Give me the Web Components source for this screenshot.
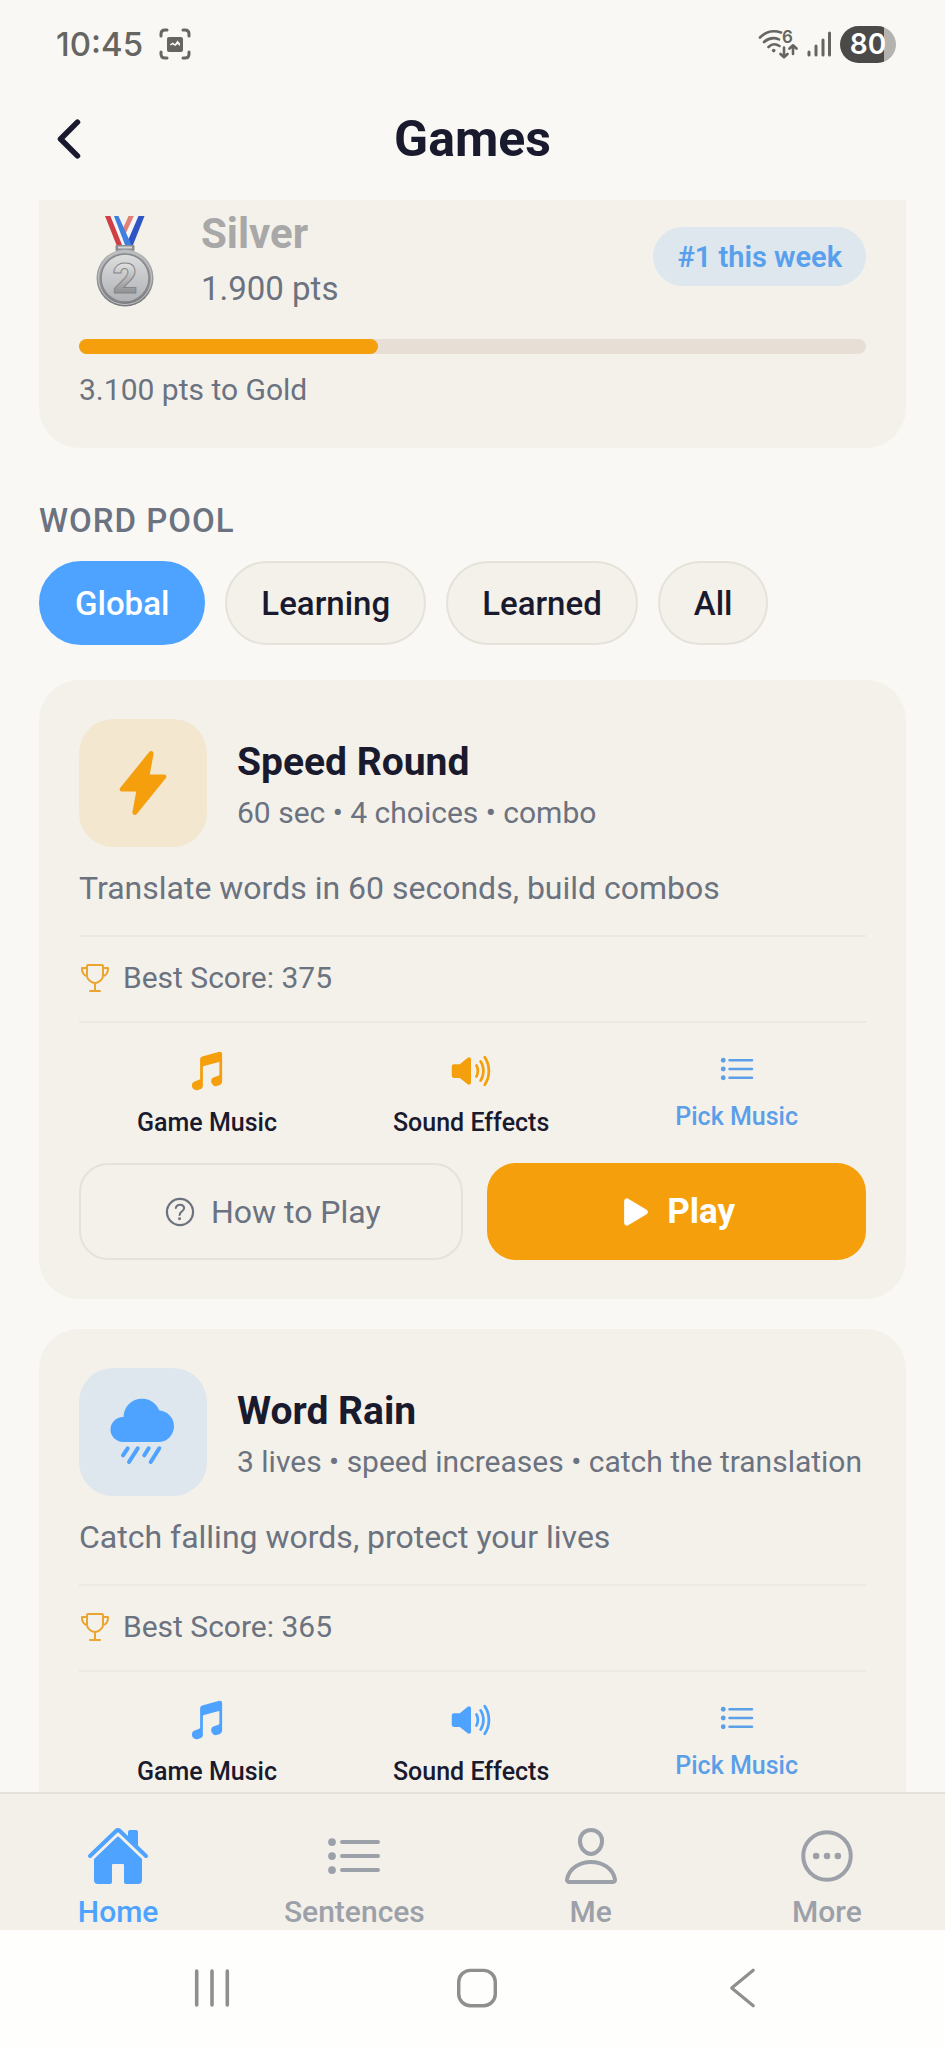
<!DOCTYPE html>
<html lang="en">
<head>
<meta charset="utf-8">
<meta name="viewport" content="width=device-width, initial-scale=1">
<title>Games</title>
<style>
  html, body { margin: 0; }
  body {
    --bg: #faf8f5;
    --card: #f4f1ea;
    --line: #e5e2da;
    --hairline: #ece9e2;
    --ink: #1a1a2e;
    --muted: #6b7280;
    --faint: #9ca0a8;
    --orange: #f49f0b;
    --blue: #4da3ff;
    --blue-soft: #dee7ed;
    --orange-soft: #f3e7d0;
    background: var(--bg);
    color: var(--ink);
    font-family: Roboto, "Liberation Sans", sans-serif;
  }
</style>
</head>
<body>
<app-shell>
  <status-bar slot="top" time="10:45" battery="80"></status-bar>
  <app-header slot="top">Games</app-header>

  <rank-card tier="Silver" points="1.900 pts" rank="#1 this week" progress="38" next="3.100 pts to Gold"></rank-card>

  <word-pool label="WORD POOL">
    <filter-chip selected>Global</filter-chip>
    <filter-chip>Learning</filter-chip>
    <filter-chip>Learned</filter-chip>
    <filter-chip>All</filter-chip>
  </word-pool>

  <game-card accent="orange" icon="flash" best="375">
    <span slot="title">Speed Round</span>
    <span slot="meta">60 sec • 4 choices • combo</span>
    <span slot="description">Translate words in 60 seconds, build combos</span>
    <game-actions slot="actions"></game-actions>
  </game-card>

  <game-card accent="blue" icon="rainy" best="365">
    <span slot="title">Word Rain</span>
    <span slot="meta">3 lives • speed increases • catch the translation</span>
    <span slot="description">Catch falling words, protect your lives</span>
  </game-card>

  <tab-bar slot="bottom">
    <tab-item icon="home" active>Home</tab-item>
    <tab-item icon="list">Sentences</tab-item>
    <tab-item icon="person">Me</tab-item>
    <tab-item icon="more">More</tab-item>
  </tab-bar>
  <system-nav slot="bottom"></system-nav>
</app-shell>

<script>
/* Registers an element whose shadow root is built from a markup function. */
const element = (name, render) => customElements.define(name, class extends HTMLElement {
  connectedCallback() {
    if (this.shadowRoot) return;
    const template = document.createElement('template');
    template.innerHTML = render(this);
    this.attachShadow({ mode: 'open' }).append(template.content.cloneNode(true));
  }
});

const stroke = (width) => `fill="none" stroke="currentColor" stroke-width="${width}" stroke-linecap="round" stroke-linejoin="round"`;

const ICONS = {
  back: `<path ${stroke(48)} d="M328 112 184 256l144 144"/>`,
  flash: `<path d="M194.82 496a18.36 18.36 0 01-18.1-21.53v-.11L204.83 320H96a16 16 0 01-12.44-26.06L302.73 23a18.45 18.45 0 0132.8 13.71c0 .3-.08.59-.13.89L307.19 192H416a16 16 0 0112.44 26.06L209.24 489a18.45 18.45 0 01-14.42 7z"/>`,
  rainy: `<g transform="scale(7.53)"><circle cx="33" cy="19.2" r="18.5"/><circle cx="14" cy="31.5" r="12.5"/><circle cx="49.3" cy="28.3" r="15.7"/><path d="M14 25h36v19H14z"/><path ${stroke(4)} d="M18.7 50.3 14 57.3M28.7 50.3 20 64M39.7 50.3l-4.4 7M50.3 50.3 41.7 64"/></g>`,
  trophy: `<path ${stroke(32)} d="M176 464h160M256 464V336M384 224c0-50.64-.08-134.63-.12-160a16 16 0 00-16-16l-223.79.26a16 16 0 00-16 15.95c0 30.58-.13 129.17-.13 159.79 0 64.28 83 112 128 112S384 288.28 384 224zM128 96H48v16c0 55.22 33.55 112 80 112M384 96h80v16c0 55.22-33.55 112-80 112"/>`,
  music: `<path d="M421.84 37.37a25.86 25.86 0 00-22.6-4.46L199.92 86.49A32.3 32.3 0 00176 118v226c0 6.74-4.36 12.56-11.11 14.83l-.12.05-52 18C92.88 383.53 80 402 80 423.91a55.54 55.54 0 0023.23 45.63A54.78 54.78 0 00135.34 480a55.82 55.82 0 0017.75-2.93l.38-.13 21.84-7.94A47.84 47.84 0 00208 423.91v-212c0-7.29 4.77-13.21 12.16-15.07l.21-.06L395 150.14a4 4 0 015 3.86v141.93c0 6.75-4.25 12.38-11.11 14.68l-.25.09-50.89 18.11A49.09 49.09 0 00304 375.92a55.67 55.67 0 0023.23 45.8 54.63 54.63 0 0049.88 7.35l.36-.12 21.84-7.95A47.83 47.83 0 00432 375.92V58a25.74 25.74 0 00-10.16-20.63z"/>`,
  volume: `<path d="M232 416a23.88 23.88 0 01-14.2-4.68 8.27 8.27 0 01-.66-.51L125.76 336H56a24 24 0 01-24-24V200a24 24 0 0124-24h69.75l91.37-74.81a8.27 8.27 0 01.66-.51A24 24 0 01256 120v272a24 24 0 01-24 24zM320 336a16 16 0 01-14.29-23.19c9.49-18.87 14.3-38 14.3-56.81 0-19.38-4.66-37.94-14.25-56.73a16 16 0 0128.5-14.54C346.19 208.12 352 231.44 352 256c0 23.86-6 47.81-17.7 71.19A16 16 0 01320 336zM368 384a16 16 0 01-13.86-24C373.05 327.09 384 299.51 384 256c0-44.17-10.93-71.56-29.82-103.94a16 16 0 0127.64-16.12C402.92 172.11 416 204.81 416 256c0 50.43-13.06 83.29-34.13 120a16 16 0 01-13.87 8zM416 432a16 16 0 01-13.39-24.74C429.85 365.47 448 323.76 448 256c0-66.5-18.18-108.62-45.38-151.31a16 16 0 1127-17.2C459.81 134.89 480 181.74 480 256c0 64.75-14.66 113.63-50.6 168.74A16 16 0 01416 432z"/>`,
  list: `<path ${stroke(32)} d="M160 144h288M160 256h288M160 368h288"/><circle cx="80" cy="144" r="31"/><circle cx="80" cy="256" r="31"/><circle cx="80" cy="368" r="31"/>`,
  help: `<circle ${stroke(30)} cx="256" cy="256" r="176"/><path ${stroke(28)} d="M200 202.29s.84-17.5 19.57-32.57C230.68 160.77 244 158.18 256 158c10.93-.14 20.69 1.67 26.53 4.45 10 4.76 29.47 16.38 29.47 41.09 0 26-17 37.81-36.37 50.8S251 281.43 251 296"/><circle cx="250" cy="348" r="20"/>`,
  play: `<path d="M133 440a35.37 35.37 0 01-17.5-4.67c-12-6.8-19.46-20-19.46-34.33V111c0-14.37 7.46-27.53 19.46-34.33a35.13 35.13 0 0135.77.45l247.85 148.36a36 36 0 010 61l-247.89 148.4A35.5 35.5 0 01133 440z"/>`,
  home: `<path d="M261.56 101.69a8 8 0 00-11.06 0L66.4 277.15a8 8 0 00-2.47 5.79L63.9 448a32 32 0 0032 32H192a16 16 0 0016-16V328a8 8 0 018-8h80a8 8 0 018 8v136a16 16 0 0016 16h96.06a32 32 0 0032-32V282.94a8 8 0 00-2.47-5.79z"/><path d="M490.91 244.15l-74.8-71.56V64a16 16 0 00-16-16h-48a16 16 0 00-16 16v32l-57.92-55.38C272.77 35.14 264.71 32 256 32c-8.68 0-16.72 3.14-22.14 8.63l-212.7 203.5c-6.22 6-7 15.87-1.34 22.37A16 16 0 0043 267.56L250.5 69.28a8 8 0 0111.06 0l207.52 198.28a16 16 0 0022.59-.44c6.14-6.36 5.63-16.86-.76-22.97z"/>`,
  person: `<path ${stroke(32)} d="M344 144c-3.92 52.87-44 96-88 96s-84.15-43.12-88-96c-4-55 35-96 88-96s92 42 88 96zM256 304c-87 0-175.3 48-191.64 138.6C62.39 453.52 68.57 464 80 464h352c11.44 0 17.62-10.48 15.65-21.4C431.3 352 343 304 256 304z"/>`,
  more: `<circle ${stroke(32)} cx="256" cy="256" r="190"/><circle cx="169" cy="256" r="26"/><circle cx="256" cy="256" r="26"/><circle cx="343" cy="256" r="26"/>`,
  sysRecents: `<path ${stroke(46)} d="M60 40v432M256 40v432M452 40v432"/>`,
  sysHome: `<rect ${stroke(44)} x="22" y="30" width="468" height="452" rx="150"/>`,
  sysBack: `<path ${stroke(40)} d="M400 28 124 256l276 228"/>`
};

element('app-icon', (el) => `
  <style>
    :host { display: block; flex: none; }
    svg { display: block; width: 100%; height: 100%; overflow: visible; }
  </style>
  <svg viewBox="0 0 512 512" fill="currentColor" aria-hidden="true">${ICONS[el.getAttribute('name')]}</svg>`);

element('app-shell', () => `
  <style>
    :host { display: flex; flex-direction: column; height: 100vh; }
    main { flex: 1; min-height: 0; overflow-y: auto; scrollbar-width: none; display: flex; flex-direction: column; padding: 0 39px; }
    ::slotted(*) { flex: none; }
  </style>
  <slot name="top"></slot>
  <main><slot></slot></main>
  <slot name="bottom"></slot>`);

element('status-bar', (el) => `
  <style>
    :host { display: flex; align-items: center; justify-content: space-between; height: 88px; padding: 0 49px 0 56px; color: #656561; font-family: Inter, Roboto, sans-serif; }
    div { display: flex; align-items: center; gap: 8px; }
    .left { gap: 16px; }
    time { font-size: 33px; line-height: 40px; font-weight: 500; }
    svg { display: block; }
    .battery { width: 56px; height: 37px; border-radius: 19px; justify-content: center; background: linear-gradient(90deg, #4b4a48 79%, #b4b3b0 79%); color: #fff; font-size: 28px; line-height: 36px; font-weight: 600; }
  </style>
  <div class="left">
    <time>${el.getAttribute('time')}</time>
    <svg width="32" height="32" viewBox="0 0 32 32" aria-hidden="true">
      <path fill="none" stroke="currentColor" stroke-width="3" stroke-linecap="round" d="M2 8V6q0-4 4-4h2M24 2h2q4 0 4 4v2M30 24v2q0 4-4 4h-2M8 30H6q-4 0-4-4v-2"/>
      <rect x="8" y="9" width="16" height="15" rx="2" fill="currentColor"/>
      <path fill="#faf8f5" d="M11 16.500l2.500-2 2.500 1.500 2.500-3.500 2.500 3v2.500l-2.500-2-2 2-3-1.500-2.500 1z"/>
    </svg>
  </div>
  <div>
    <svg width="41" height="34" viewBox="0 0 41 34" fill="none" stroke="currentColor" stroke-width="2.6" stroke-linecap="round" stroke-linejoin="round" aria-hidden="true">
      <path d="M2 10.500Q11 1.500 23 5.500M6 15q7-6 15-2.600M10.500 20q5-5 11-1M26 20.500V30M22.500 27l3.500 3.200 3.500-3.200M35 27v-8.500M31.500 21.500l3.500-3.200 3.500 3.200"/>
      <circle cx="15.700" cy="23.600" r="1.800" fill="currentColor" stroke="none"/>
      <text x="24" y="16" font-size="17" font-weight="600" fill="currentColor" stroke="none">6</text>
    </svg>
    <svg width="25" height="28" viewBox="0 0 25 28" fill="none" stroke="currentColor" stroke-width="3" stroke-linecap="round" aria-hidden="true">
      <path d="M2 22v3M9 16v9M16 10v15M22.500 3v22"/>
    </svg>
    <div class="battery">${el.getAttribute('battery')}</div>
  </div>`);

element('app-header', () => `
  <style>
    :host { display: grid; grid-template-columns: 1fr auto 1fr; align-items: center; height: 102px; padding: 0 39px 10px; box-sizing: border-box; height: 112px; }
    button { border: 0; padding: 0; background: none; color: inherit; justify-self: start; }
    app-icon { width: 60px; height: 60px; }
    h1 { margin: 0; font-size: 50px; line-height: 60px; font-weight: 700; }
  </style>
  <button type="button" aria-label="Back"><app-icon name="back"></app-icon></button>
  <h1><slot></slot></h1>`);

element('rank-card', (el) => `
  <style>
    :host { display: block; padding: 9px 40px 40px; background: var(--card); border-radius: 0 0 40px 40px; }
    .row { display: flex; align-items: center; gap: 28px; }
    .medal { display: block; flex: none; }
    .who { flex: 1; display: flex; flex-direction: column; gap: 10px; }
    h2 { margin: 0; font-size: 42px; line-height: 50px; font-weight: 700; color: #a8a8a8; }
    p { margin: 0; color: var(--muted); }
    .points { font-size: 33px; line-height: 40px; }
    .next { margin-top: 18px; font-size: 30px; line-height: 36px; }
    .rank { align-self: flex-start; margin-top: 18px; padding: 12px 24px 11px; border-radius: 30px; background: var(--blue-soft); color: #58a0ec; font-size: 29px; line-height: 36px; font-weight: 600; }
    .track { height: 15px; margin-top: 30px; border-radius: 8px; background: #e7dfd5; }
    .fill { height: 100%; border-radius: 8px; background: var(--orange); width: ${el.getAttribute('progress')}%; }
  </style>
  <div class="row">
    <svg class="medal" width="94" height="100" viewBox="0 0 94 100" aria-hidden="true">
      <defs>
        <linearGradient id="rim" x1="0" y1="0" x2="0" y2="1"><stop offset="0" stop-color="#b9babb"/><stop offset="1" stop-color="#77787b"/></linearGradient>
        <linearGradient id="face" x1="0" y1="0" x2="0" y2="1"><stop offset="0" stop-color="#dcdddd"/><stop offset="1" stop-color="#b0b1b4"/></linearGradient>
        <linearGradient id="digit" x1="0" y1="0" x2="0" y2="1"><stop offset="0.2" stop-color="#e2e2e2"/><stop offset="0.8" stop-color="#8f9092"/></linearGradient>
      </defs>
      <path fill="#e08078" d="M49.500 7H55L45 30l-3-6z"/>
      <path fill="#f5f4f6" d="M55 7h4.500L48 36h-5l1-6z"/>
      <path fill="#2f55c4" d="M59.500 7h6L54 36h-7z"/>
      <path fill="#cf3f45" d="M26 7h5.500L44 36h-6.500z"/>
      <path fill="#f5f4f6" d="M31.500 7H35l12 29h-4z"/>
      <path fill="#3f7fe0" d="M35 7h4.500l13 29h-6.500z"/>
      <rect x="36.500" y="36" width="19" height="6" rx="1" fill="#8d8e91"/>
      <rect x="39" y="37.500" width="14" height="2" fill="#d5d6d8"/>
      <circle cx="46" cy="69" r="28.500" fill="url(#rim)"/>
      <circle cx="46" cy="69" r="26.500" fill="none" stroke="#c4c5c7" stroke-width="1"/>
      <circle cx="46" cy="69" r="24" fill="url(#face)" stroke="#85868a" stroke-width="1.500"/>
      <text x="46" y="84" text-anchor="middle" font-size="43" font-weight="900" fill="url(#digit)" stroke="#85868a" stroke-width="1">2</text>
    </svg>
    <div class="who">
      <h2>${el.getAttribute('tier')}</h2>
      <p class="points">${el.getAttribute('points')}</p>
    </div>
    <div class="rank">${el.getAttribute('rank')}</div>
  </div>
  <div class="track"><div class="fill"></div></div>
  <p class="next">${el.getAttribute('next')}</p>`);

element('word-pool', (el) => `
  <style>
    :host { display: block; margin: 54px 0 35px; }
    h2 { margin: 0 0 21px; font-size: 33px; line-height: 38px; font-weight: 500; letter-spacing: 1px; color: var(--muted); }
    div { display: flex; flex-wrap: wrap; gap: 20px; }
  </style>
  <h2>${el.getAttribute('label')}</h2>
  <div><slot></slot></div>`);

element('filter-chip', (el) => `
  <style>
    :host { display: block; }
    button { display: block; padding: 21px 34px 19px; border: 2px solid var(--line); border-radius: 42px; background: var(--card); color: var(--ink); font: 500 33px/40px Roboto, sans-serif; }
    :host([selected]) button { border-color: var(--blue); background: var(--blue); color: #fff; }
  </style>
  <button type="button" aria-pressed="${el.hasAttribute('selected')}"><slot></slot></button>`);

element('game-card', (el) => `
  <style>
    :host { display: block; padding: 39px 40px; margin-bottom: 30px; border-radius: 40px; background: var(--card); --accent: var(--orange); --soft: var(--orange-soft); }
    :host([accent="blue"]) { --accent: var(--blue); --soft: var(--blue-soft); }
    header { display: flex; align-items: center; gap: 30px; }
    .tile { display: grid; place-items: center; flex: none; width: 128px; height: 128px; border-radius: 34px; background: var(--soft); color: var(--accent); }
    .tile app-icon { width: 68px; height: 68px; }
    .text { padding-top: 4px; }
    h3 { margin: 0 0 10px; font-size: 39px; line-height: 46px; font-weight: 700; }
    p { margin: 0; color: var(--muted); }
    .meta { font-size: 30px; line-height: 36px; white-space: nowrap; }
    .description { margin: 22px 0 28px; font-size: 32px; line-height: 38px; }
    .best { display: flex; align-items: center; gap: 12px; padding: 23px 0 25px; border: solid var(--hairline); border-width: 2px 0; font-size: 30px; line-height: 36px; color: var(--muted); }
    .best app-icon { width: 32px; height: 32px; color: #eba42f; }
    .controls { display: flex; justify-content: space-around; align-items: flex-start; padding-top: 26px; }
    button { display: flex; flex-direction: column; align-items: center; gap: 13px; padding: 0; border: 0; background: none; color: var(--ink); font: 500 25px/34px Roboto, sans-serif; }
    button app-icon { width: 44px; height: 44px; color: var(--accent); }
    .pick { gap: 11px; padding: 0 10px; color: #5b9fe8; }
    .pick app-icon { width: 40px; height: 40px; color: inherit; }
  </style>
  <header>
    <div class="tile"><app-icon name="${el.getAttribute('icon')}"></app-icon></div>
    <div class="text">
      <h3><slot name="title"></slot></h3>
      <p class="meta"><slot name="meta"></slot></p>
    </div>
  </header>
  <p class="description"><slot name="description"></slot></p>
  <div class="best"><app-icon name="trophy"></app-icon><span>Best Score: ${el.getAttribute('best')}</span></div>
  <div class="controls">
    <button type="button" aria-pressed="true"><app-icon name="music"></app-icon>Game Music</button>
    <button type="button" aria-pressed="true"><app-icon name="volume"></app-icon>Sound Effects</button>
    <button type="button" class="pick"><app-icon name="list"></app-icon>Pick Music</button>
  </div>
  <slot name="actions"></slot>`);

element('game-actions', () => `
  <style>
    :host { display: flex; gap: 24px; margin-top: 23px; }
    button { box-sizing: content-box; flex: 1 1 0; display: flex; align-items: center; justify-content: center; gap: 12px; height: 97px; padding: 0; border: 0; border-radius: 29px; font: 400 32px/40px Roboto, sans-serif; }
    app-icon { width: 38px; height: 38px; }
    .help { height: 93px; border: 2px solid var(--line); background: none; color: var(--muted); }
    .play { background: var(--orange); color: #fff; font-size: 35px; font-weight: 700; }
  </style>
  <button type="button" class="help"><app-icon name="help"></app-icon>How to Play</button>
  <button type="button" class="play"><app-icon name="play"></app-icon>Play</button>`);

element('tab-bar', () => `
  <style>
    :host { display: block; border-top: 2px solid #e5e1da; background: #f3f0ea; }
    nav { display: grid; grid-template-columns: repeat(4, 1fr); padding-top: 30px; }
  </style>
  <nav><slot></slot></nav>`);

element('tab-item', (el) => `
  <style>
    :host { display: block; color: var(--faint); }
    :host([active]) { color: var(--blue); }
    a { display: flex; flex-direction: column; align-items: center; gap: 6px; color: inherit; text-decoration: none; font-size: 30px; line-height: 36px; font-weight: 500; }
    app-icon { width: 64px; height: 64px; }
  </style>
  <a href="#${el.getAttribute('icon')}"><app-icon name="${el.getAttribute('icon')}"></app-icon><span><slot></slot></span></a>`);

element('system-nav', () => `
  <style>
    :host { display: grid; grid-template-columns: repeat(3, 1fr); align-items: center; box-sizing: border-box; height: 118px; padding: 0 71px 2px 80px; background: #fefefd; color: #8f8f8d; }
    button { justify-self: center; padding: 0; border: 0; background: none; color: inherit; }
    app-icon { width: 40px; height: 40px; }
  </style>
  <button type="button" aria-label="Recent apps"><app-icon name="sysRecents"></app-icon></button>
  <button type="button" aria-label="Home screen"><app-icon name="sysHome"></app-icon></button>
  <button type="button" aria-label="Go back"><app-icon name="sysBack"></app-icon></button>`);
</script>
</body>
</html>
